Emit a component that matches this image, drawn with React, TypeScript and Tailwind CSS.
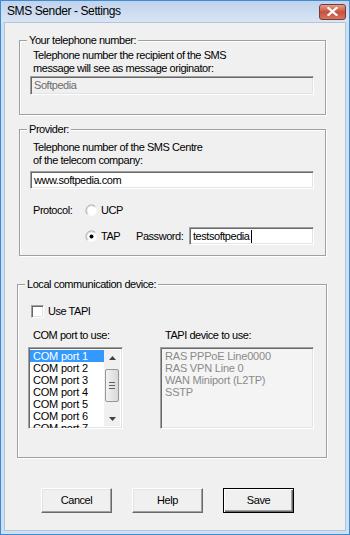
import React from "react";

const sunken =
  "border border-t-[#a0a0a0] border-l-[#a0a0a0] border-r-white border-b-white shadow-[inset_1px_1px_0_#696969,inset_-1px_-1px_0_#e3e3e3]";

const Radio = ({ checked }: { checked?: boolean }) => (
  <svg width="13" height="13" viewBox="0 0 13 13">
    <circle cx="6.5" cy="6.5" r="5.5" fill="#fff" />
    <path d="M2.6 10.4 A5.5 5.5 0 0 1 10.4 2.6" fill="none" stroke="#9a9a9a" strokeWidth="1" />
    <path d="M3.3 9.7 A4.5 4.5 0 0 1 9.7 3.3" fill="none" stroke="#e0e0e0" strokeWidth="1" />
    <path d="M10.4 2.6 A5.5 5.5 0 0 1 2.6 10.4" fill="none" stroke="#f4f4f4" strokeWidth="1" />
    {checked && <circle cx="6.5" cy="6.5" r="2" fill="#000" />}
  </svg>
);

const Button = ({ label, primary }: { label: string; primary?: boolean }) => (
  <button
    className={
      primary
        ? "w-[71px] h-[25px] bg-[#f0f0f0] border border-black shadow-[inset_1px_1px_0_#fff,inset_-1px_-1px_0_#696969,inset_-2px_-2px_0_#a0a0a0] text-black"
        : "w-[71px] h-[25px] bg-[#f0f0f0] border border-t-white border-l-white border-r-[#696969] border-b-[#696969] shadow-[inset_-1px_-1px_0_#a0a0a0,inset_1px_1px_0_#e3e3e3] text-black"
    }
  >
    {label}
  </button>
);

const Group = ({
  title,
  className,
  children,
}: {
  title: string;
  className: string;
  children: React.ReactNode;
}) => (
  <div
    className={
      "relative border border-[#a0a0a0] shadow-[inset_1px_1px_0_#fff,1px_1px_0_#fff] flex flex-col " +
      className
    }
  >
    <span className="absolute -top-[7px] left-[7px] bg-[#f0f0f0] px-[2px] leading-[13px]">{title}</span>
    {children}
  </div>
);

const comPorts = ["COM port 1", "COM port 2", "COM port 3", "COM port 4", "COM port 5", "COM port 6", "COM port 7"];
const tapiDevices = ["RAS PPPoE Line0000", "RAS VPN Line 0", "WAN Miniport (L2TP)", "SSTP"];

export default function App() {
  return (
    <div className="w-[350px] h-[535px] border border-[#3d8bd0] bg-[#cfdff2] flex flex-col font-['Liberation_Sans',Arial,sans-serif] text-[11px] tracking-[-0.45px] leading-[13px] text-black select-none">
      {/* title bar */}
      <div className="h-[21px] flex items-center justify-between pl-[6px] pr-[3px] bg-gradient-to-b from-[#c0d3ec] to-[#d8e5f5]">
        <span className="text-[12px] tracking-[-0.4px] text-black">SMS Sender - Settings</span>
        <div className="w-[27px] h-[16px] rounded-[3px] border border-[#7a3a33] bg-gradient-to-b from-[#e0a08f] via-[#c8503c] to-[#d27561] flex items-center justify-center">
          <svg width="11" height="9" viewBox="0 0 11 9">
            <path d="M1.5 1 L9.5 8 M9.5 1 L1.5 8" stroke="#fff" strokeWidth="2.2" strokeLinecap="square" />
          </svg>
        </div>
      </div>

      {/* client area */}
      <div className="flex-1 mx-[3px] mb-[3px] bg-[#f0f0f0] border border-[#b4c4d8] flex flex-col">
        <Group title="Your telephone number:" className="ml-[14px] mt-[17px] w-[307px] h-[75px]">
          <div className="pt-[8px] pl-[13px]">
            <div>Telephone number the recipient of the SMS</div>
            <div>message will see as message originator:</div>
          </div>
          <div className={"ml-[10px] mt-[1px] w-[284px] h-[19px] bg-[#f0f0f0] text-[#6d6d6d] pl-[3px] flex items-center " + sunken}>
            Softpedia
          </div>
        </Group>

        <Group title="Provider:" className="ml-[14px] mt-[14px] w-[307px] h-[127px]">
          <div className="pt-[11px] pl-[13px]">
            <div>Telephone number of the SMS Centre</div>
            <div>of the telecom company:</div>
          </div>
          <div className={"ml-[10px] mt-[4px] w-[284px] h-[18px] bg-white pl-[3px] flex items-center " + sunken}>
            www.softpedia.com
          </div>
          <div className="mt-[14px] flex items-center h-[14px]">
            <span className="ml-[13px] w-[52px]">Protocol:</span>
            <Radio />
            <span className="ml-[3px]">UCP</span>
          </div>
          <div className="mt-[10px] flex items-center h-[18px]">
            <span className="ml-[65px] flex">
              <Radio checked />
            </span>
            <span className="ml-[3px] w-[35px]">TAP</span>
            <span className="w-[53px]">Password:</span>
            <div className={"w-[125px] h-[18px] bg-white pl-[3px] flex items-center " + sunken}>
              testsoftpedia
              <span className="inline-block w-[1px] h-[13px] bg-black ml-[1px]" />
            </div>
          </div>
        </Group>

        <Group title="Local communication device:" className="ml-[12px] mt-[28px] w-[310px] h-[174px]">
          <div className="mt-[20px] ml-[13px] flex items-center h-[13px]">
            <span className={"w-[13px] h-[13px] bg-white " + sunken} />
            <span className="ml-[4px]">Use TAPI</span>
          </div>
          <div className="mt-[11px] flex">
            <span className="ml-[15px] w-[132px]">COM port to use:</span>
            <span>TAPI device to use:</span>
          </div>
          <div className="mt-[5px] flex">
            <div className={"ml-[10px] w-[95px] h-[82px] bg-white flex overflow-hidden " + sunken}>
              <div className="flex-1 pt-[2px] pl-[1px] text-[11px] leading-[12px] tracking-[-0.2px] overflow-hidden">
                {comPorts.map((p, i) => (
                  <div
                    key={p}
                    className={i === 0 ? "bg-[#3399ff] text-white pl-[3px] h-[12px]" : "pl-[3px] h-[12px]"}
                  >
                    {p}
                  </div>
                ))}
              </div>
              <div className="w-[16px] my-[2px] mr-[2px] bg-[#f0f0f0] flex flex-col items-center">
                <div className="h-[15px] flex items-center justify-center">
                  <svg width="7" height="4" viewBox="0 0 7 4">
                    <path d="M3.5 0 L7 4 L0 4 Z" fill="#404040" />
                  </svg>
                </div>
                <div className="mt-[4px] w-[14px] h-[33px] rounded-[2px] border border-[#979797] bg-gradient-to-r from-[#f2f2f2] to-[#d8d8d8] flex flex-col items-center justify-center gap-[2px]">
                  <span className="w-[6px] h-[1px] bg-[#606060]" />
                  <span className="w-[6px] h-[1px] bg-[#606060]" />
                  <span className="w-[6px] h-[1px] bg-[#606060]" />
                </div>
                <div className="flex-1" />
                <div className="h-[15px] flex items-center justify-center">
                  <svg width="7" height="4" viewBox="0 0 7 4">
                    <path d="M0 0 L7 0 L3.5 4 Z" fill="#404040" />
                  </svg>
                </div>
              </div>
            </div>
            <div className={"ml-[37px] w-[154px] h-[82px] bg-[#f4f4f4] pt-[2px] pl-[4px] text-[11px] leading-[12px] tracking-[-0.2px] text-[#8a8a8a] " + sunken}>
              {tapiDevices.map((d) => (
                <div key={d} className="h-[12px]">
                  {d}
                </div>
              ))}
            </div>
          </div>
        </Group>

        <div className="mt-[30px] ml-[36px] flex gap-[20px]">
          <Button label="Cancel" />
          <Button label="Help" />
          <Button label="Save" primary />
        </div>
      </div>
    </div>
  );
}
